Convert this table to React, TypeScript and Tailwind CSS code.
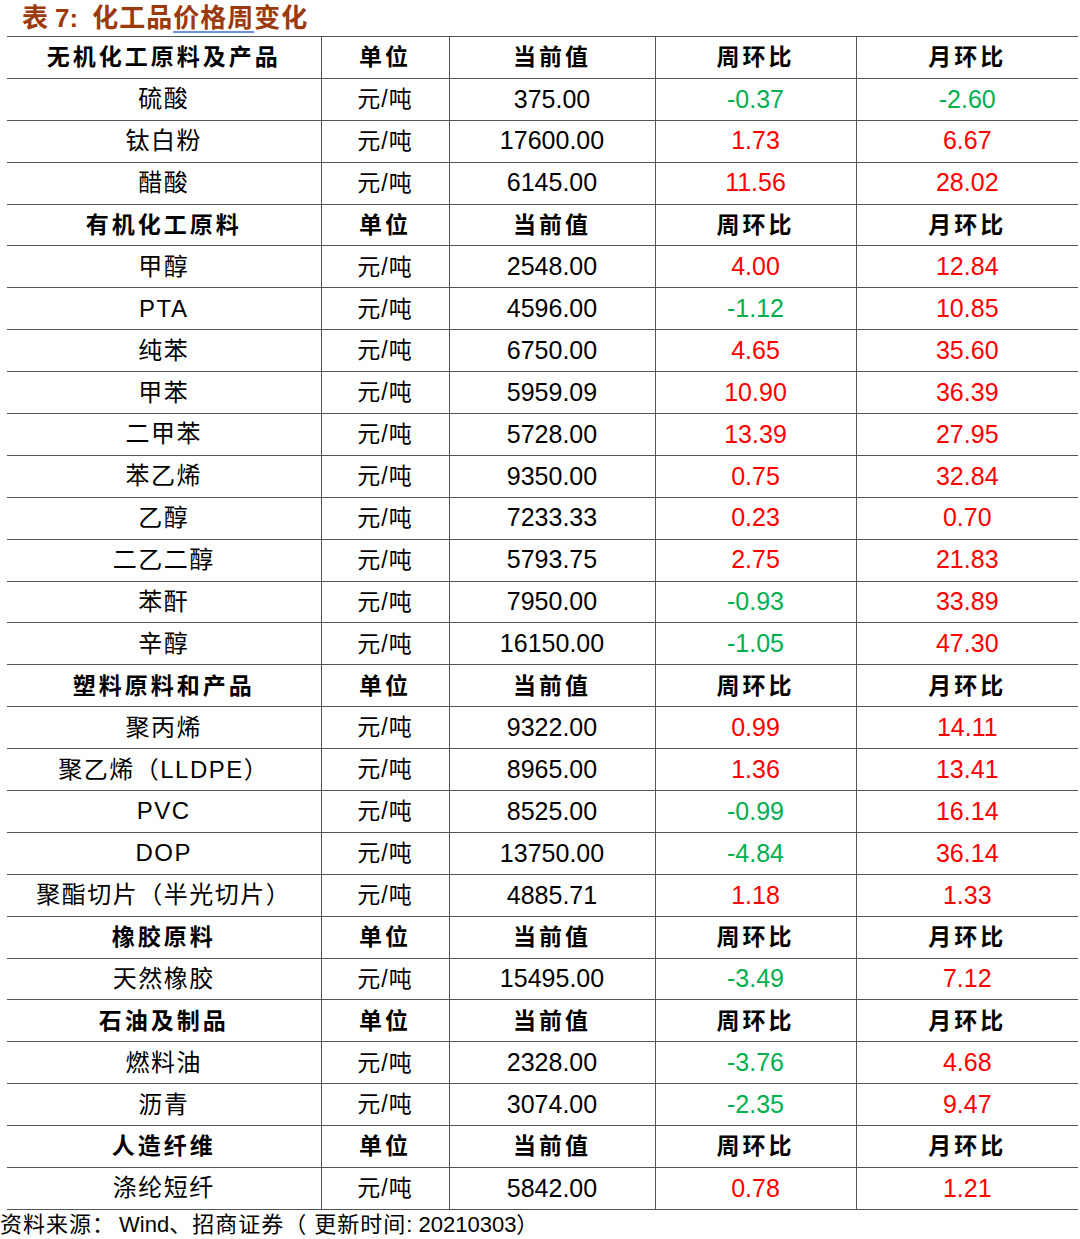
import React from 'react';

type Row = { name: string; price?: string; week?: string; month?: string; head?: boolean };

const rows: Row[] = [
  { name: '无机化工原料及产品', head: true },
  { name: '硫酸', price: '375.00', week: '-0.37', month: '-2.60' },
  { name: '钛白粉', price: '17600.00', week: '1.73', month: '6.67' },
  { name: '醋酸', price: '6145.00', week: '11.56', month: '28.02' },
  { name: '有机化工原料', head: true },
  { name: '甲醇', price: '2548.00', week: '4.00', month: '12.84' },
  { name: 'PTA', price: '4596.00', week: '-1.12', month: '10.85' },
  { name: '纯苯', price: '6750.00', week: '4.65', month: '35.60' },
  { name: '甲苯', price: '5959.09', week: '10.90', month: '36.39' },
  { name: '二甲苯', price: '5728.00', week: '13.39', month: '27.95' },
  { name: '苯乙烯', price: '9350.00', week: '0.75', month: '32.84' },
  { name: '乙醇', price: '7233.33', week: '0.23', month: '0.70' },
  { name: '二乙二醇', price: '5793.75', week: '2.75', month: '21.83' },
  { name: '苯酐', price: '7950.00', week: '-0.93', month: '33.89' },
  { name: '辛醇', price: '16150.00', week: '-1.05', month: '47.30' },
  { name: '塑料原料和产品', head: true },
  { name: '聚丙烯', price: '9322.00', week: '0.99', month: '14.11' },
  { name: '聚乙烯（LLDPE）', price: '8965.00', week: '1.36', month: '13.41' },
  { name: 'PVC', price: '8525.00', week: '-0.99', month: '16.14' },
  { name: 'DOP', price: '13750.00', week: '-4.84', month: '36.14' },
  { name: '聚酯切片（半光切片）', price: '4885.71', week: '1.18', month: '1.33' },
  { name: '橡胶原料', head: true },
  { name: '天然橡胶', price: '15495.00', week: '-3.49', month: '7.12' },
  { name: '石油及制品', head: true },
  { name: '燃料油', price: '2328.00', week: '-3.76', month: '4.68' },
  { name: '沥青', price: '3074.00', week: '-2.35', month: '9.47' },
  { name: '人造纤维', head: true },
  { name: '涤纶短纤', price: '5842.00', week: '0.78', month: '1.21' },
];

const cjk = "font-['Liberation_Sans','Noto_Sans_CJK_SC',sans-serif]";

function Num({ v, last }: { v?: string; last?: boolean }) {
  const neg = v?.startsWith('-');
  return (
    <td
      className={`${last ? 'border-y border-l' : 'border'} border-[#555] text-center text-[25px] ${
        neg ? 'text-[#00b050]' : 'text-[#ff0000]'
      }`}
    >
      {v}
    </td>
  );
}

export default function App() {
  return (
    <div className={`w-[1080px] bg-white ${cjk} text-black`}>
      <div className="flex h-[36px] items-center pl-[22px] text-[26px] font-bold leading-none text-[#9c3a0e]">
        <span>表</span>
        <span className="ml-[7px]">7:</span>
        <span className="ml-[14px] tracking-[1px]">化工品</span>
        <span className="tracking-[1px] underline decoration-[#6f8fe0] decoration-2 underline-offset-4">价格周</span>
        <span className="tracking-[1px]">变化</span>
      </div>
      <table className="ml-[7px] w-[1071px] table-fixed border-collapse">
        <colgroup>
          <col className="w-[314px]" />
          <col className="w-[128px]" />
          <col className="w-[206px]" />
          <col className="w-[201px]" />
          <col className="w-[222px]" />
        </colgroup>
        <tbody>
          {rows.map((r, i) =>
            r.head ? (
              <tr key={i} className="h-[41.9px] text-[23px] font-bold tracking-[3px]">
                <td className="border-y border-r border-[#555] text-center">{r.name}</td>
                <td className="border border-[#555] text-center">单位</td>
                <td className="border border-[#555] text-center">当前值</td>
                <td className="border border-[#555] text-center">周环比</td>
                <td className="border-y border-l border-[#555] text-center">月环比</td>
              </tr>
            ) : (
              <tr key={i} className="h-[41.9px]">
                <td className="border-y border-r border-[#555] text-center text-[24px] tracking-[1.5px]">{r.name}</td>
                <td className="border border-[#555] text-center text-[23px] tracking-[1px]">元/吨</td>
                <td className="border border-[#555] text-center text-[25px]">{r.price}</td>
                <Num v={r.week} />
                <Num v={r.month} last />
              </tr>
            ),
          )}
        </tbody>
      </table>
      <div className="flex h-[30px] items-center text-[22px] leading-none">
        <span className="tracking-[1px]">资料来源：</span>
        <span className="ml-[4px]">Wind</span>
        <span className="tracking-[1px]">、招商证券（ 更新时间</span>
        <span>: 20210303）</span>
      </div>
    </div>
  );
}
